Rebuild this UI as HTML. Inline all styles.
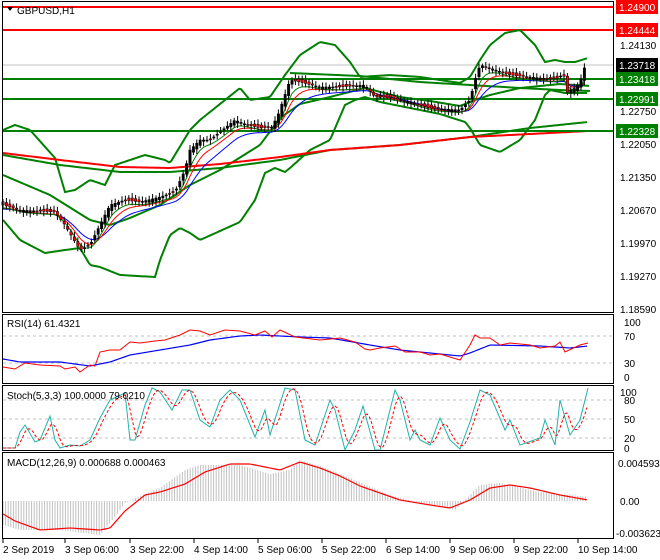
<!DOCTYPE html>
<html><head><meta charset="utf-8"><style>
html,body{margin:0;padding:0;background:#fff;width:660px;height:560px;overflow:hidden}
svg{display:block;font-family:"Liberation Sans",sans-serif}
</style></head><body>
<svg id="s" width="660" height="560" viewBox="0 0 660 560" xmlns="http://www.w3.org/2000/svg">
<rect width="660" height="560" fill="#fff"/>
<g id="g"></g>
<rect x="2.5" y="1.5" width="611" height="311" fill="none" stroke="#000"/>
<rect x="2.5" y="314.5" width="611" height="69" fill="none" stroke="#000"/>
<rect x="2.5" y="385.5" width="611" height="65" fill="none" stroke="#000"/>
<rect x="2.5" y="452.5" width="611" height="86" fill="none" stroke="#000"/>
<g font-size="10" fill="#000">
<text x="620" y="49">1.24130</text>
<text x="620" y="115">1.22750</text>
<text x="620" y="148">1.22050</text>
<text x="620" y="181">1.21350</text>
<text x="620" y="214">1.20670</text>
<text x="620" y="247">1.19970</text>
<text x="620" y="280">1.19270</text>
<text x="620" y="313">1.18590</text>
<text x="624" y="326">100</text>
<text x="624" y="340">70</text>
<text x="624" y="367">30</text>
<text x="624" y="381">0</text>
<text x="620" y="396">100</text>
<text x="624" y="404">80</text>
<text x="624" y="423">50</text>
<text x="624" y="442">20</text>
<text x="624" y="452">0</text>
<text x="618" y="467">0.004593</text>
<text x="620" y="505">0.00</text>
<text x="616" y="537">-0.003623</text>
</g>
<g font-size="10">
<rect x="616" y="0" width="42" height="14" fill="#f00"/><text x="619" y="11" fill="#fff">1.24900</text>
<rect x="616" y="23" width="42" height="14" fill="#f00"/><text x="619" y="34" fill="#fff">1.24444</text>
<rect x="616" y="58" width="42" height="14" fill="#000"/><text x="619" y="69" fill="#fff">1.23718</text>
<rect x="616" y="72" width="42" height="14" fill="#008000"/><text x="619" y="83" fill="#fff">1.23418</text>
<rect x="616" y="92" width="42" height="14" fill="#008000"/><text x="619" y="103" fill="#fff">1.22991</text>
<rect x="616" y="124" width="42" height="14" fill="#008000"/><text x="619" y="135" fill="#fff">1.22328</text>
</g>
<g font-size="10" fill="#000">
<path d="M7 7 L13 7 L10 11 Z" fill="#000"/>
<text x="17" y="14">GBPUSD,H1</text>
<text x="7" y="327">RSI(14) 61.4321</text>
<text x="7" y="399">Stoch(5,3,3) 100.0000 79.0210</text>
<text x="7" y="466">MACD(12,26,9) 0.000688 0.000463</text>
<text x="3" y="553">2 Sep 2019</text>
<text x="65" y="553">3 Sep 06:00</text>
<text x="130" y="553">3 Sep 22:00</text>
<text x="194" y="553">4 Sep 14:00</text>
<text x="258" y="553">5 Sep 06:00</text>
<text x="322" y="553">5 Sep 22:00</text>
<text x="386" y="553">6 Sep 14:00</text>
<text x="450" y="553">9 Sep 06:00</text>
<text x="514" y="553">9 Sep 22:00</text>
<text x="578" y="553">10 Sep 14:00</text>
</g>
</svg>
<script>
var g=document.getElementById('g'),h='';
function lerp(pts,x){for(var i=0;i<pts.length-1;i++){if(x<=pts[i+1][0]){var a=pts[i],b=pts[i+1];return a[1]+(b[1]-a[1])*(x-a[0])/(b[0]-a[0]);}}return pts[pts.length-1][1];}
function pl(pts,col,w,extra){var d=pts.map(function(p,i){return (i?'L':'M')+p[0]+' '+p[1]}).join(' ');h+='<path d="'+d+'" fill="none" stroke="'+col+'" stroke-width="'+w+'" '+(extra||'')+'/>';}
function smooth(pts){var o=[];for(var x=Math.max(3,pts[0][0]);x<=Math.min(590,pts[pts.length-1][0]);x+=2)o.push([x,lerp(pts,x)]);return o;}
function line(x1,y1,x2,y2,c,w,e){h+='<line x1="'+x1+'" y1="'+y1+'" x2="'+x2+'" y2="'+y2+'" stroke="'+c+'" stroke-width="'+w+'" '+(e||'')+'/>';}
[3,65,130,194,258,322,386,450,514,578].forEach(function(x){line(x,539,x,543,'#000',1)});
line(3,7,613,7,'#f00',2);line(3,30,613,30,'#f00',2);
line(3,65,613,65,'#c0c0c0',1);
[336,363].forEach(function(y){line(3,y,613,y,'#c0c0c0',1,'stroke-dasharray="3,3"')});
[400,419,438].forEach(function(y){line(3,y,613,y,'#c0c0c0',1,'stroke-dasharray="3,3"')});
var hist=[[3,525],[20,530],[60,530],[100,535],[115,517],[125,503],[140,496],[160,488],[185,470],[200,465],[240,465],[270,474],[290,470],[300,460],[320,466],[350,478],[390,495],[420,503],[440,507],[455,510],[465,500],[480,485],[500,483],[540,492],[590,497]];
for(var x=3;x<=588;x+=2.6){line(x,501,x,lerp(hist,x),'#c0c0c0',1);}
pl(smooth([[3,514],[15,521],[40,530],[70,528],[100,530],[110,528],[125,511],[145,495],[160,492],[185,484],[205,472],[230,464],[250,464],[280,470],[300,462],[320,468],[340,476],[360,486],[400,500],[430,505],[450,508],[470,500],[490,488],[510,485],[530,488],[560,495],[588,500]]),'#f00',1.2);
pl(smooth([[3,359],[20,362],[60,362],[90,366],[110,362],[130,355],[160,350],[190,345],[210,340],[240,336],[260,335],[300,337],[330,338],[370,345],[400,350],[430,353],[460,356],[470,353],[490,345],[540,346],[570,348],[588,346]]),'#00f',1.2);
pl([[3,367],[15,369],[25,363],[40,365],[60,366],[65,369],[75,367],[80,372],[90,365],[95,366],[100,352],[110,350],[120,350],[130,342],[140,343],[155,341],[165,340],[180,335],[190,330],[200,331],[210,335],[225,330],[240,331],[255,335],[265,331],[272,337],[280,330],[295,337],[320,340],[340,338],[355,342],[365,349],[370,350],[380,348],[395,346],[405,352],[420,352],[430,355],[440,354],[460,360],[470,345],[475,335],[480,338],[490,338],[500,345],[510,343],[530,345],[540,348],[555,346],[560,342],[565,352],[580,345],[588,343]],'#f00',1);
var st=[[3,448],[15,448],[20,432],[25,425],[35,442],[40,440],[50,416],[55,440],[60,448],[70,445],[80,446],[90,440],[100,418],[110,400],[125,393],[130,440],[135,440],[145,405],[152,388],[160,392],[172,410],[182,390],[190,390],[200,420],[210,427],[220,400],[230,390],[240,400],[255,437],[265,410],[270,435],[285,388],[295,390],[305,440],[315,445],[330,400],[335,410],[345,450],[355,430],[363,406],[375,450],[380,450],[395,390],[400,400],[410,440],[415,430],[420,440],[430,445],[440,418],[450,440],[460,449],[470,422],[480,390],[490,395],[505,430],[510,420],[520,445],[540,438],[545,420],[555,445],[560,400],[570,435],[580,420],[588,388]];
pl(st,'#20b2aa',1);
var sm=smooth(st),sg=[];for(var i=0;i<sm.length;i++){var a=0,n=0;for(var j=Math.max(0,i-4);j<=i;j++){a+=sm[j][1];n++;}sg.push([sm[i][0],a/n]);}
pl(sg,'#f00',1,'stroke-dasharray="3,2"');
var G='#008000';
pl(smooth([[3,130],[15,125],[30,130],[55,158],[65,192],[75,190],[90,180],[105,185],[115,165],[145,155],[165,160],[170,163],[190,130],[200,120],[215,108],[240,88],[250,100],[270,97],[285,75],[300,55],[320,42],[335,45],[350,62],[360,77],[390,75],[420,77],[440,80],[460,83],[470,77],[480,60],[490,45],[505,33],[520,30],[535,45],[545,62],[555,60],[565,62],[575,62],[588,58]]),G,2);
pl(smooth([[3,220],[20,240],[45,253],[65,250],[80,248],[90,265],[100,267],[120,275],[155,277],[160,260],[170,235],[180,228],[190,233],[200,240],[240,222],[255,200],[265,173],[275,168],[285,172],[290,168],[310,150],[330,140],[345,105],[355,100],[365,97],[380,102],[400,106],[420,110],[440,114],[465,122],[470,128],[480,145],[500,152],[520,140],[535,120],[545,95],[550,90],[565,93],[575,93],[588,93]]),G,2);
pl(smooth([[3,175],[50,195],[90,220],[110,225],[130,218],[160,205],[190,185],[220,170],[260,145],[280,118],[300,104],[330,97],[365,88],[400,97],[430,101],[460,106],[475,100],[490,95],[520,88],[560,84],[590,86]]),G,2);
pl(smooth([[290,73],[360,76],[420,82],[470,85],[520,88],[560,90],[590,91]]),G,2);
pl(smooth([[3,155],[60,165],[120,172],[170,172],[220,168],[280,160],[330,150],[400,145],[470,137],[530,128],[588,122]]),G,2);
pl(smooth([[3,153],[60,160],[120,167],[170,168],[220,164],[280,157],[330,150],[400,145],[470,137],[530,134],[588,131]]),'#f00',2);
line(3,79,613,79,G,2);line(3,99,613,99,G,2);line(3,131,613,131,G,2);
var P=[[3,205],[20,210],[55,212],[65,225],[80,250],[90,245],[95,235],[110,205],[125,200],[140,202],[160,197],[175,192],[185,170],[190,150],[200,140],[210,140],[225,128],[235,120],[245,124],[260,128],[272,127],[278,115],[285,95],[290,80],[300,82],[320,87],[340,87],[365,85],[375,97],[390,97],[410,102],[430,108],[460,110],[470,100],[475,80],[480,65],[490,68],[510,75],[550,79],[560,78],[563,68],[566,93],[575,88],[580,82],[585,66]];
var e1=null,e2=null,e3=null,m1=[],m2=[],m3=[],cs='';
for(var x=3;x<=586;x+=3.4){var c=lerp(P,x),o=lerp(P,x-3.4)+(Math.sin(x*1.7)*2.5);e1=e1==null?c:e1+(c-e1)*0.4;e2=e2==null?c:e2+(c-e2)*0.25;e3=e3==null?c:e3+(c-e3)*0.15;m1.push([x,(e1+3).toFixed(1)]);m2.push([x,(e2+3).toFixed(1)]);m3.push([x,(e3+4).toFixed(1)]);
var hi=Math.min(o,c)-2-Math.abs(Math.sin(x*3.1))*3,lo=Math.max(o,c)+2+Math.abs(Math.cos(x*2.3))*3;
var t=Math.min(o,c),b=Math.max(o,c);if(b-t<1)b=t+1;
cs+='<line x1="'+x+'" y1="'+hi+'" x2="'+x+'" y2="'+lo+'" stroke="#000" stroke-width="1"/><rect x="'+(x-1.2)+'" y="'+t+'" width="2.4" height="'+(b-t)+'" fill="'+(c<o?'#000':'#f00')+'" stroke="#000" stroke-width="0.5"/>';}
pl(m3,'#00f',1);pl(m2,'#f00',1);pl(m1,G,1);
h+=cs;
g.innerHTML=h;
</script>
</body></html>
